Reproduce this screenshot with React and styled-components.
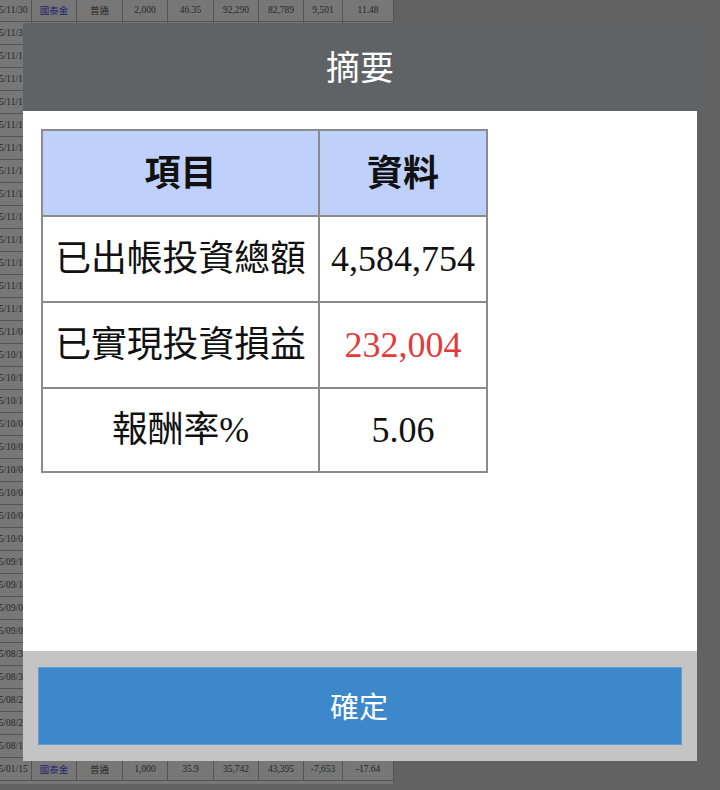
import React from "react";
import styled, { createGlobalStyle } from "styled-components";

const Global = createGlobalStyle`
  html, body { margin: 0; padding: 0; height: 100%; overflow: hidden; background: #a3a3a3; }
  body { font-family: "Liberation Serif", "Noto Sans CJK TC", serif; }
`;

const Ledger = styled.table`
  table-layout: fixed;
  width: 409px;
  margin: -2px 0 0 -15px;
  border-spacing: 1px;
  border-collapse: separate;
  background: #8c8c8c;
  font-size: 9.5px;
  color: #444;
`;
const LedgerCell = styled.td`
  height: 22px;
  padding: 0;
  text-align: center;
  white-space: nowrap;
  background: #c6c6c6;
  box-sizing: border-box;
  color: ${(p) => (p.$link ? "#3a3ab4" : "inherit")};
`;
const LedgerEnd = styled.div`
  width: 393px;
  height: 3px;
  background: #c6c6c6;
`;
const Overlay = styled.div`
  position: fixed;
  inset: 0;
  box-sizing: border-box;
  padding: 23px 23px 29px;
  display: flex;
  background: rgba(0, 0, 0, 0.4);
`;
const Modal = styled.section`
  flex: 1;
  display: flex;
  flex-direction: column;
`;
const Header = styled.header`
  height: 88px;
  box-sizing: border-box;
  padding-bottom: 4px;
  display: flex;
  align-items: center;
  justify-content: center;
  background: #5f6365;
  color: #fff;
  font: 400 34px "Noto Sans CJK TC", sans-serif;
`;
const Body = styled.div`
  flex: 1;
  background: #fff;
  padding: 18px;
`;
const SummaryTable = styled.table`
  width: 445px;
  table-layout: fixed;
  border-collapse: collapse;
  border: 2px solid #6c6c6c;
  color: #111;
`;
const Col = styled.col`
  width: ${(p) => p.$w}px;
`;
const HeadCell = styled.th`
  height: 84px;
  padding: 0;
  background: #bfd0fa;
  border: 2px solid #8b8b8b;
  font: 700 36px/40px "Noto Sans CJK TC", sans-serif;
`;
const LabelCell = styled.td`
  height: ${(p) => (p.$last ? 82 : 84)}px;
  padding: 0;
  text-align: center;
  white-space: nowrap;
  border: 2px solid #8b8b8b;
  font: 400 35.8px/40px "Liberation Serif", "Noto Sans CJK TC", serif;
`;
const CellText = styled.span`
  display: block;
  margin-top: ${(p) => (p.$head ? -6 : -1)}px;
`;
const ValueCell = styled(LabelCell)`
  font-size: 36px;
  color: ${(p) => (p.$loss ? "#e23b3b" : "#111")};
`;
const Footer = styled.footer`
  display: flex;
  padding: 16px 15px;
  background: #c4c4c4;
`;
const Confirm = styled.button`
  flex: 1;
  height: 78px;
  border: 1px solid #5e9dd6;
  border-radius: 0;
  padding: 0 2px 3px 0;
  background: #3d87cb;
  color: #fff;
  font: 400 29px "Noto Sans CJK TC", sans-serif;
`;

const dates = [
  "105/11/30", "105/11/30",
  ...Array(12).fill("105/11/15"),
  "105/11/02",
  ...Array(3).fill("105/10/14"),
  ...Array(6).fill("105/10/05"),
  "105/09/14", "105/09/12", "105/09/05", "105/09/02",
  "105/08/31", "105/08/30", "105/08/25", "105/08/22", "105/08/15",
  "105/01/15",
];
const detail = {
  0: ["國泰金", "普通", "2,000", "46.35", "92,290", "82,789", "9,501", "11.48"],
  33: ["國泰金", "普通", "1,000", "35.9", "35,742", "43,395", "-7,653", "-17.64"],
};
const widths = [45, 44, 45, 44, 45, 44, 44, 38, 50];
const summary = [
  ["已出帳投資總額", "4,584,754", false],
  ["已實現投資損益", "232,004", true],
  ["報酬率%", "5.06", false],
];

export default function App() {
  return (
    <>
      <Global />
      <Ledger>
        <colgroup>
          {widths.map((w, i) => (
            <Col key={i} $w={w} />
          ))}
        </colgroup>
        <tbody>
          {dates.map((date, r) => {
            const cells = detail[r] || Array(8).fill("");
            return (
              <tr key={r}>
                <LedgerCell>{date}</LedgerCell>
                {cells.map((c, i) => (
                  <LedgerCell key={i} $link={i === 0}>
                    {c}
                  </LedgerCell>
                ))}
              </tr>
            );
          })}
        </tbody>
      </Ledger>
      <LedgerEnd />
      <Overlay>
        <Modal>
          <Header>摘要</Header>
          <Body>
            <SummaryTable>
              <colgroup>
                <Col $w={277} />
                <Col $w={168} />
              </colgroup>
              <thead>
                <tr>
                  <HeadCell><CellText $head>項目</CellText></HeadCell>
                  <HeadCell><CellText $head>資料</CellText></HeadCell>
                </tr>
              </thead>
              <tbody>
                {summary.map(([label, value, red], i) => (
                  <tr key={label}>
                    <LabelCell $last={i === 2}><CellText>{label}</CellText></LabelCell>
                    <ValueCell $last={i === 2} $loss={red}><CellText>{value}</CellText></ValueCell>
                  </tr>
                ))}
              </tbody>
            </SummaryTable>
          </Body>
          <Footer>
            <Confirm>確定</Confirm>
          </Footer>
        </Modal>
      </Overlay>
    </>
  );
}
